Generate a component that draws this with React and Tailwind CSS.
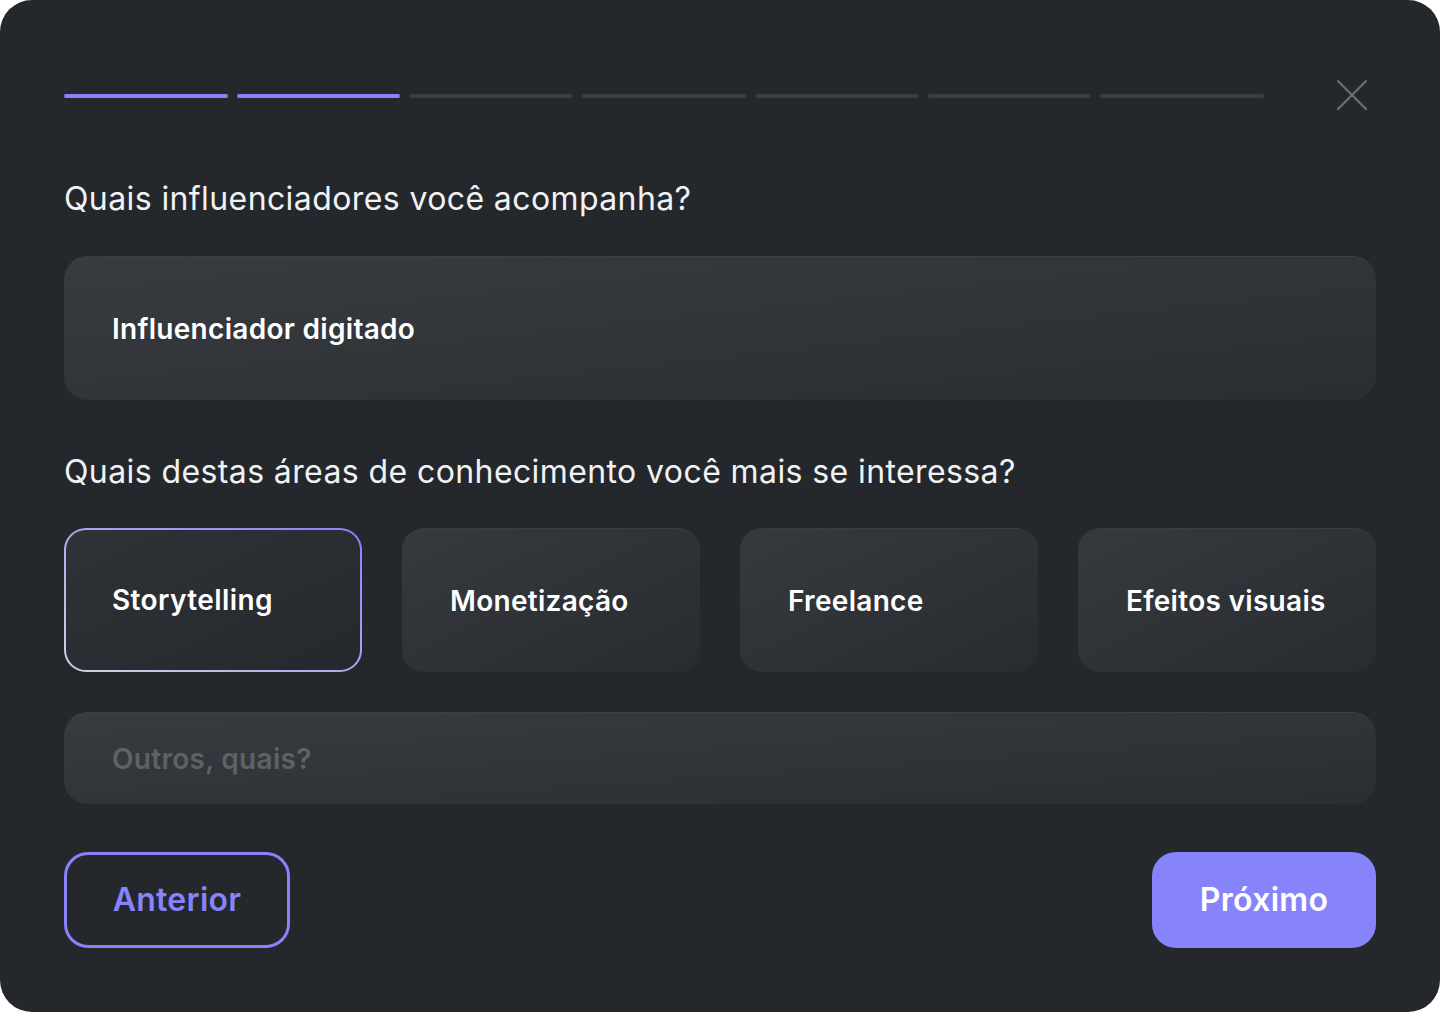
import React, { useState } from "react";

const steps = [true, true, false, false, false, false, false];
const areas = ["Storytelling", "Monetização", "Freelance", "Efeitos visuais"];

function CloseIcon() {
  return (
    <svg className="w-[32px] h-[32px]" viewBox="0 0 32 32" fill="none" stroke="#6b6e73" strokeWidth="2.2" strokeLinecap="round">
      <path d="M2 2l28 28M30 2L2 30" />
    </svg>
  );
}

export default function App() {
  const [selected, setSelected] = useState("Storytelling");

  return (
    <div className="min-h-screen bg-white font-['Inter',sans-serif]">
      <div className="w-[1440px] h-[1012px] rounded-[32px] bg-[#24272c] px-16 pt-[81px] flex flex-col">
        <div className="flex items-center">
          <div className="flex gap-[9px] w-[1200px]">
            {steps.map((done, i) => (
              <div
                key={i}
                className={
                  "flex-1 h-[4px] rounded-full " +
                  (done ? "bg-[#8683fb]" : "bg-[#3a3d42]")
                }
              />
            ))}
          </div>
          <button className="ml-auto mr-[8px] -mt-[2px]">
            <CloseIcon />
          </button>
        </div>

        <h2 className="mt-[68px] text-[32px] leading-[40px] text-[#f1f2f3] tracking-[0.4px]">
          Quais influenciadores você acompanha?
        </h2>

        <div className="mt-[37px] h-[144px] rounded-[24px] bg-gradient-to-br from-[#383c41] to-[#2a2d31] border-t border-[#3c4045] flex items-center px-12">
          <span className="text-[28px] font-semibold text-white tracking-[0.3px]">Influenciador digitado</span>
        </div>

        <h2 className="mt-[52px] text-[32px] leading-[40px] text-[#f1f2f3] tracking-[0.4px]">
          Quais destas áreas de conhecimento você mais se interessa?
        </h2>

        <div className="mt-[36px] grid grid-cols-4 gap-[40px]">
          {areas.map((a) => {
            const active = a === selected;
            return (
              <button
                key={a}
                onClick={() => setSelected(a)}
                className={
                  "h-[144px] rounded-[22px] text-left " +
                  (active
                    ? "bg-gradient-to-tr from-[#d2d3dc] via-[#a9a8f0] to-[#8683fb] p-[2px]"
                    : "px-12 bg-gradient-to-br from-[#363a3f] to-[#282b30] border-t border-[#3a3e43]")
                }
              >
                {active ? (
                  <div className="w-full h-full rounded-[20px] bg-gradient-to-br from-[#2f3237] to-[#25282d] flex items-center px-[46px]">
                    <span className="text-[28px] font-semibold text-white tracking-[0.4px]">{a}</span>
                  </div>
                ) : (
                  <span className="text-[28px] font-semibold text-white tracking-[0.3px]">{a}</span>
                )}
              </button>
            );
          })}
        </div>

        <div className="mt-[40px] h-[92px] rounded-[24px] bg-gradient-to-br from-[#383c41] to-[#2a2d31] border-t border-[#3c4045] flex items-center px-12">
          <input
            placeholder="Outros, quais?"
            className="w-full bg-transparent outline-none text-[28px] font-semibold text-white tracking-[0.3px] placeholder:text-[#5e6267]"
          />
        </div>

        <div className="mt-[48px] flex justify-between">
          <button className="w-[226px] h-[96px] rounded-[24px] border-[3px] border-[#8683fb] text-[#8683fb] text-[32px] font-semibold tracking-[0.3px]">
            Anterior
          </button>
          <button className="w-[224px] h-[96px] rounded-[24px] bg-[#8784fb] text-white text-[32px] font-semibold tracking-[0.3px]">
            Próximo
          </button>
        </div>
      </div>
    </div>
  );
}
